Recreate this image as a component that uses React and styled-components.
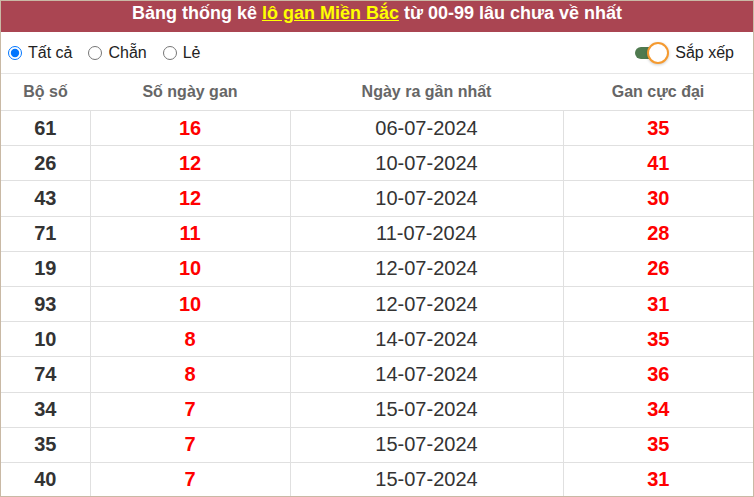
import React from "react";
import styled, { createGlobalStyle } from "styled-components";

const Global = createGlobalStyle`
  html, body { margin: 0; padding: 0; background: #fff; }
  body { font-family: "Liberation Sans", Arial, sans-serif; }
`;

const Frame = styled.div`
  width: 754px;
  height: 497px;
  box-sizing: border-box;
  border: 1px solid #c9b9a5;
  overflow: hidden;
  background: #fff;
`;

const Title = styled.div`
  height: 31px;
  background: #aa4552;
  color: #fff;
  font-weight: bold;
  font-size: 18px;
  line-height: 20px;
  display: flex;
  align-items: flex-start;
  justify-content: center;
  padding-top: 2px;
  box-sizing: border-box;
`;

const Link = styled.span`
  color: #ffff00;
  text-decoration: underline;
  margin: 0 5px;
`;

const Controls = styled.div`
  height: 42px;
  display: flex;
  align-items: center;
  justify-content: space-between;
  padding: 0 19px 0 7px;
  border-bottom: 1px solid #e6e6e6;
  box-sizing: border-box;
  font-size: 16px;
  color: #222;
`;

const Radios = styled.div`
  display: flex;
  align-items: center;
  gap: 16px;
`;

const RadioLabel = styled.label`
  display: flex;
  align-items: center;
  gap: 6px;
`;

const Radio = styled.input`
  margin: 0;
  width: 14px;
  height: 14px;
`;

const Sort = styled.div`
  display: flex;
  align-items: center;
  gap: 16px;
`;

const Track = styled.div`
  position: relative;
  width: 24px;
  height: 12px;
  border-radius: 6px;
  background: #4f7a4f;
`;

const Knob = styled.div`
  position: absolute;
  left: 12px;
  top: -5px;
  width: 18px;
  height: 18px;
  border-radius: 50%;
  background: #fff;
  border: 2px solid #f59a2f;
  box-shadow: 0 1px 3px rgba(0,0,0,0.2);
`;

const Table = styled.table`
  border-collapse: collapse;
  width: 752px;
  table-layout: fixed;
`;

const Th = styled.th`
  height: 36px;
  color: #666;
  font-size: 16px;
  font-weight: bold;
  text-align: center;
  border-bottom: 1px solid #e0e0e0;
  padding: 0;
`;

const Td = styled.td`
  height: 34.2px;
  padding: 0;
  text-align: center;
  font-size: 20px;
  border: 1px solid #e0e0e0;
  border-top: none;
  border-left: ${(p) => (p.$first ? "none" : "1px solid #e0e0e0")};
  border-right: ${(p) => (p.$last ? "none" : "1px solid #e0e0e0")};
  color: ${(p) => (p.$red ? "#ff0000" : "#333")};
  font-weight: ${(p) => (p.$bold ? "bold" : "normal")};
`;

const rows = [
  ["61", "16", "06-07-2024", "35"],
  ["26", "12", "10-07-2024", "41"],
  ["43", "12", "10-07-2024", "30"],
  ["71", "11", "11-07-2024", "28"],
  ["19", "10", "12-07-2024", "26"],
  ["93", "10", "12-07-2024", "31"],
  ["10", "8", "14-07-2024", "35"],
  ["74", "8", "14-07-2024", "36"],
  ["34", "7", "15-07-2024", "34"],
  ["35", "7", "15-07-2024", "35"],
  ["40", "7", "15-07-2024", "31"],
];

export default function App() {
  return (
    <>
      <Global />
      <Frame>
        <Title>
          Bảng thống kê<Link>lô gan Miền Bắc</Link>từ 00-99 lâu chưa về nhất
        </Title>
        <Controls>
          <Radios>
            <RadioLabel>
              <Radio type="radio" name="f" defaultChecked /> Tất cả
            </RadioLabel>
            <RadioLabel>
              <Radio type="radio" name="f" /> Chẵn
            </RadioLabel>
            <RadioLabel>
              <Radio type="radio" name="f" /> Lẻ
            </RadioLabel>
          </Radios>
          <Sort>
            <Track>
              <Knob />
            </Track>
            Sắp xếp
          </Sort>
        </Controls>
        <Table>
          <colgroup>
            <col style={{ width: 89 }} />
            <col style={{ width: 200 }} />
            <col style={{ width: 273 }} />
            <col style={{ width: 190 }} />
          </colgroup>
          <thead>
            <tr>
              <Th>Bộ số</Th>
              <Th>Số ngày gan</Th>
              <Th>Ngày ra gần nhất</Th>
              <Th>Gan cực đại</Th>
            </tr>
          </thead>
          <tbody>
            {rows.map((r) => (
              <tr key={r[0]}>
                <Td $first $bold>{r[0]}</Td>
                <Td $red $bold>{r[1]}</Td>
                <Td>{r[2]}</Td>
                <Td $last $red $bold>{r[3]}</Td>
              </tr>
            ))}
          </tbody>
        </Table>
      </Frame>
    </>
  );
}
